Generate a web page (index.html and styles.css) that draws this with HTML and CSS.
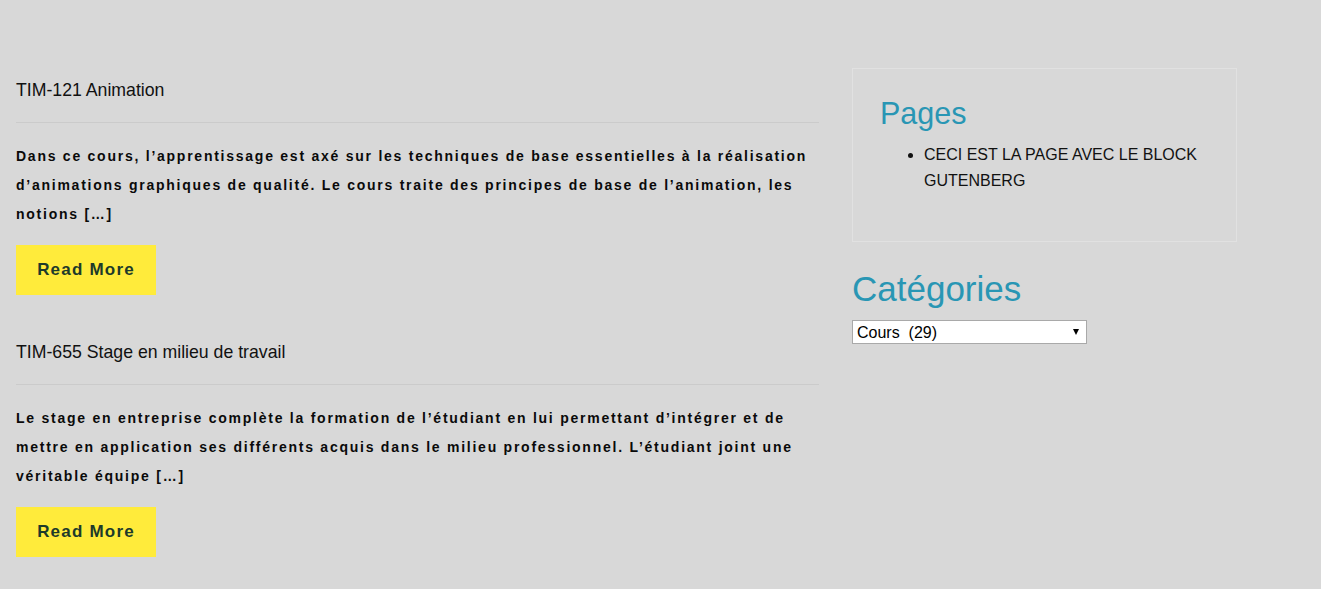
FILE: index.html
```html
<!DOCTYPE html>
<html lang="fr">
<head>
<meta charset="utf-8">
<title>Cours</title>
<link rel="stylesheet" href="styles.css">
</head>
<body>
<div class="page">
  <main class="content">
    <article class="post">
      <h2 class="post-title">TIM-121 Animation</h2>
      <hr class="post-sep">
      <p class="post-excerpt">Dans ce cours, l’apprentissage est axé sur les techniques de base essentielles à la réalisation d’animations graphiques de qualité. Le cours traite des principes de base de l’animation, les notions […]</p>
      <a class="read-more" href="#">Read More</a>
    </article>
    <article class="post">
      <h2 class="post-title">TIM-655 Stage en milieu de travail</h2>
      <hr class="post-sep">
      <p class="post-excerpt">Le stage en entreprise complète la formation de l’étudiant en lui permettant d’intégrer et de mettre en application ses différents acquis dans le milieu professionnel. L’étudiant joint une véritable équipe […]</p>
      <a class="read-more" href="#">Read More</a>
    </article>
  </main>
  <aside class="sidebar">
    <section class="widget widget-boxed">
      <h2 class="widget-title">Pages</h2>
      <ul class="widget-list">
        <li>CECI EST LA PAGE AVEC LE BLOCK GUTENBERG</li>
      </ul>
    </section>
    <section class="widget">
      <h2 class="widget-title widget-title-lg">Catégories</h2>
      <span class="select-wrap">
        <select class="cat-select">
          <option>Cours&nbsp;&nbsp;(29)</option>
        </select>
      </span>
    </section>
  </aside>
</div>
</body>
</html>
```

FILE: styles.css
```css
html, body {
  margin: 0;
  padding: 0;
}
body {
  background: #d8d8d8;
  font-family: "Liberation Sans", Arial, sans-serif;
  color: #111;
}
.page {
  display: flex;
  align-items: flex-start;
  gap: 33px;
  padding: 68px 0 0 16px;
}
.content {
  width: 803px;
  padding-top: 11px;
  display: flex;
  flex-direction: column;
  gap: 46px;
}
.post {
  display: flex;
  flex-direction: column;
  align-items: flex-start;
}
.post-title {
  margin: 0;
  font-size: 17.7px;
  font-weight: normal;
  line-height: 22px;
  color: #111;
}
.post-sep {
  align-self: stretch;
  margin: 21px 0 0;
  border: 0;
  height: 1px;
  background: #cbcbcb;
}
.post-excerpt {
  margin: 19px 0 0;
  font-size: 14px;
  font-weight: bold;
  letter-spacing: 1.75px;
  line-height: 29px;
  color: #0a0a0a;
}
.read-more {
  margin-top: 16px;
  display: flex;
  align-items: center;
  justify-content: center;
  width: 140px;
  height: 50px;
  background: #ffeb3b;
  color: #1d3a2a;
  font-size: 17px;
  font-weight: bold;
  letter-spacing: 1.2px;
  text-decoration: none;
}
.sidebar {
  width: 385px;
  display: flex;
  flex-direction: column;
  gap: 27px;
}
.widget-boxed {
  border: 1px solid #e1e1e1;
  padding: 26px 20px 40px 27px;
  height: 174px;
  box-sizing: border-box;
}
.widget-title {
  margin: 0;
  font-size: 30.5px;
  font-weight: normal;
  line-height: 36px;
  color: #2996b4;
}
.widget-title-lg {
  font-size: 35px;
  line-height: 40px;
}
.widget-list {
  margin: 11px 0 0;
  padding-left: 44px;
  font-size: 16px;
  line-height: 26px;
  color: #111;
}
.select-wrap {
  position: relative;
  display: inline-block;
  margin-top: 11px;
}
.cat-select {
  display: block;
  appearance: none;
  -webkit-appearance: none;
  width: 235px;
  height: 24px;
  margin: 0;
  padding: 0 20px 0 4px;
  border: 1px solid #a9a9a9;
  border-radius: 0;
  background: #fff;
  font-family: "Liberation Sans", Arial, sans-serif;
  font-size: 16px;
  color: #000;
}
.select-wrap::after {
  content: "";
  position: absolute;
  right: 8px;
  top: 9px;
  border-left: 3.5px solid transparent;
  border-right: 3.5px solid transparent;
  border-top: 6px solid #000;
  pointer-events: none;
}
```
